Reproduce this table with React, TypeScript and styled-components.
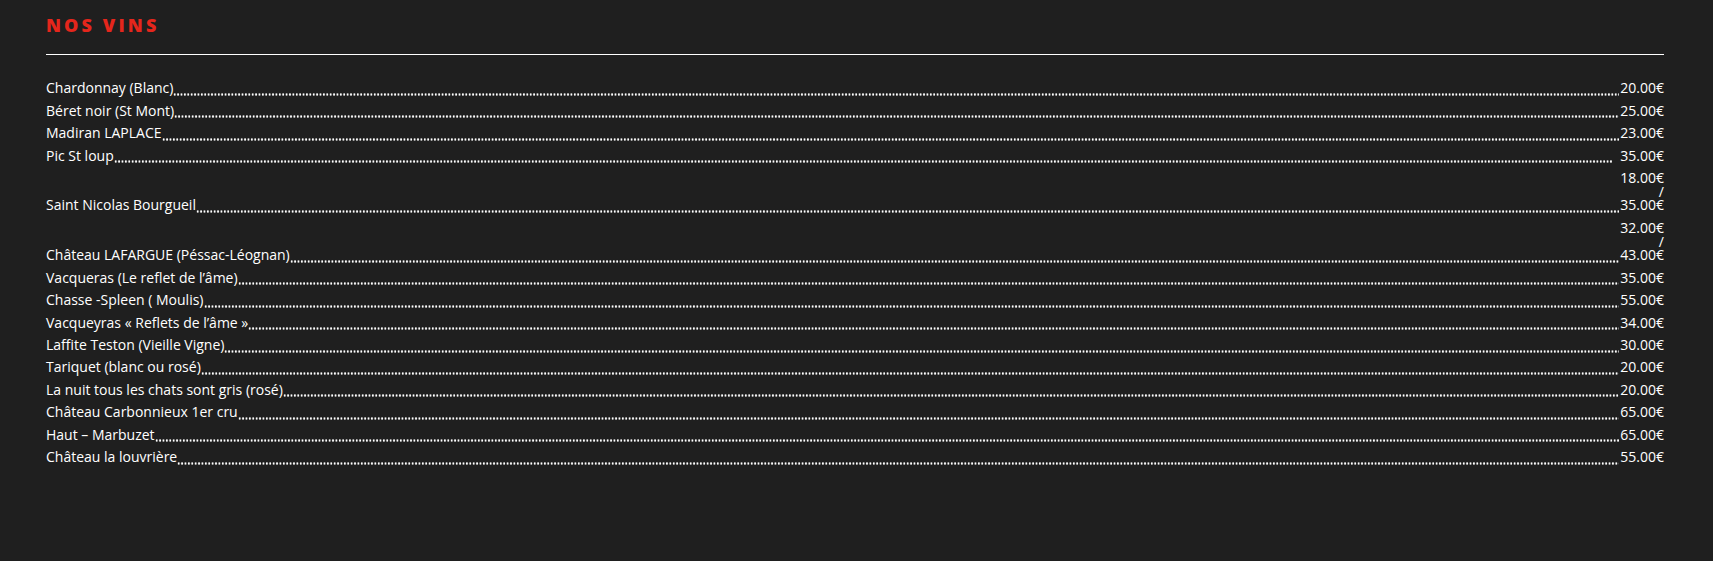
import React from 'react'
import styled, { createGlobalStyle } from 'styled-components'

const GlobalStyle = createGlobalStyle`
    html, body {
        margin: 0;
        padding: 0;
        background: #1f1f1f;
    }
    body {
        font-family: "Open Sans", "Liberation Sans", sans-serif;
        color: #ffffff;
    }
`

type Wine = { name: string; price: string; gap?: boolean }

const wines: Wine[] = [
    { name: 'Chardonnay (Blanc)', price: '20.00€' },
    { name: 'Béret noir (St Mont)', price: '25.00€' },
    { name: 'Madiran LAPLACE', price: '23.00€' },
    { name: 'Pic St loup', price: '35.00€', gap: true },
    { name: 'Saint Nicolas Bourgueil', price: '18.00€ / 35.00€' },
    { name: 'Château LAFARGUE (Péssac-Léognan)', price: '32.00€ / 43.00€' },
    { name: 'Vacqueras (Le reflet de l’âme)', price: '35.00€' },
    { name: 'Chasse -Spleen ( Moulis)', price: '55.00€' },
    { name: 'Vacqueyras « Reflets de l’âme »', price: '34.00€' },
    { name: 'Laffite Teston (Vieille Vigne)', price: '30.00€' },
    { name: 'Tariquet (blanc ou rosé)', price: '20.00€' },
    { name: 'La nuit tous les chats sont gris (rosé)', price: '20.00€' },
    { name: 'Château Carbonnieux 1er cru', price: '65.00€' },
    { name: 'Haut – Marbuzet', price: '65.00€' },
    { name: 'Château la louvrière', price: '55.00€' },
]

const WineMenu = () => {
    return (
        <Page>
            <GlobalStyle />
            <Title>NOS VINS</Title>
            <Divider />
            <List>
                {wines.map((w) => (
                    <Item key={w.name}>
                        <Name>{w.name}</Name>
                        <Dots gap={w.gap} />
                        <Price>{w.price}</Price>
                    </Item>
                ))}
            </List>
        </Page>
    )
}

const Page = styled.div`
    min-height: 561px;
    padding: 15px 49px 0 46px;
    box-sizing: border-box;
`
const Title = styled.h2`
    margin: 0;
    font-family: "Open Sans", "Liberation Sans", sans-serif;
    font-weight: 800;
    font-size: 18px;
    line-height: 20px;
    letter-spacing: 3.1px;
    color: #e5261c;
`
const Divider = styled.div`
    height: 1px;
    background: #ffffff;
    margin-top: 19px;
`
const List = styled.div`
    margin-top: 22px;
    display: flex;
    flex-direction: column;
`
const Item = styled.div`
    display: flex;
    align-items: flex-end;
    padding: 4.4px 0;
    font-size: 14px;
    line-height: 13.66px;
`
const Name = styled.span`
    flex: none;
    white-space: nowrap;
`
const Dots = styled.span<{ gap?: boolean }>`
    flex: 1;
    height: 3px;
    margin-bottom: -1px;
    margin-right: ${({ gap }) => (gap ? '7px' : '0')};
    background-image: radial-gradient(circle, #ffffff 0.95px, transparent 1.3px);
    background-size: 3.4px 3px;
    background-repeat: repeat-x;
    background-position: left bottom;
`
const Price = styled.span`
    flex: none;
    width: 45px;
    text-align: right;
`

export default WineMenu
